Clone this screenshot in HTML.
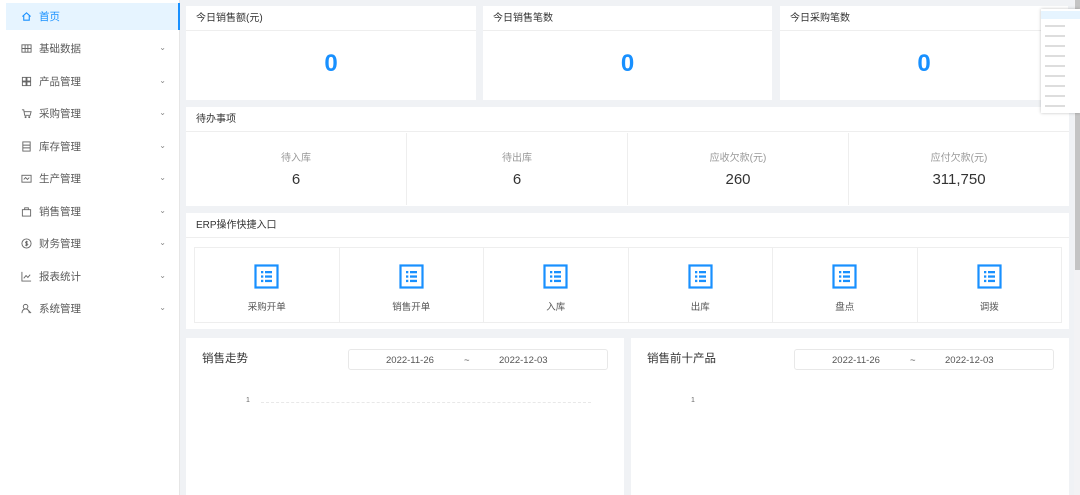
<!DOCTYPE html>
<html><head><meta charset="utf-8"><style>
*{margin:0;padding:0;box-sizing:border-box}
body{width:1080px;height:495px;overflow:hidden;background:#f0f2f5;font-family:"Liberation Sans","Noto Sans CJK SC",sans-serif;position:relative;color:#333}
.ab{position:absolute}
.side{left:0;top:0;width:180px;height:495px;background:#fff;border-right:1px solid #e6e6e6}
.mi{position:absolute;left:6px;width:174px;height:27px;font-size:10.5px;color:#5a5a5a;display:flex;align-items:center;padding-left:15px}
.mi svg{width:11px;height:11px;margin-right:7px}
.mi .ar{position:absolute;right:14px;top:8px;font-size:8px;color:#888}
.card{position:absolute;background:#fff}
.ch{font-size:10px;color:#333;height:25px;line-height:25px;padding-left:10px;border-bottom:1px solid #eee}
.big{color:#1890ff;font-weight:bold;font-size:24px;text-align:center;position:absolute;width:100%;top:44px}
.cell{position:absolute;top:26px;height:72px;text-align:center;border-right:1px solid #eee}
.cell .l{font-size:10px;color:#999;margin-top:16px}
.cell .v{font-size:15px;color:#333;margin-top:7px}
.q{position:absolute;top:34px;height:76px;border:1px solid #eee;text-align:center}
.q svg{margin-top:16px}
.q .t{font-size:9.5px;color:#555;margin-top:5px}
.date{position:absolute;border:1px solid #e8e8e8;border-radius:3px;height:21px;font-size:9.5px;color:#555}
.date span{position:absolute;top:5px}
</style></head><body>
<div class="ab side">
 <div class="mi" style="top:3px;background:#e6f4ff;color:#1890ff;border-right:2px solid #1890ff"><svg viewBox="0 0 12 12" fill="none" stroke="#1890ff" stroke-width="1.2"><path d="M1.5 6L6 2l4.5 4M3 5v5h6V5"/></svg>首页</div>
 <div class="mi" style="top:35px"><svg viewBox="0 0 12 12" fill="none" stroke="#666"><rect x="1" y="2" width="10" height="8"/><path d="M1 6h10M4.5 2v8M7.5 2v8"/></svg>基础数据<span class="ar">⌄</span></div>
 <div class="mi" style="top:68px"><svg viewBox="0 0 12 12" fill="none" stroke="#666"><rect x="1.5" y="1.5" width="4" height="4"/><rect x="6.5" y="1.5" width="4" height="4"/><rect x="1.5" y="6.5" width="4" height="4"/><rect x="6.5" y="6.5" width="4" height="4"/></svg>产品管理<span class="ar">⌄</span></div>
 <div class="mi" style="top:100px"><svg viewBox="0 0 12 12" fill="none" stroke="#666"><path d="M1 2h2l1 6h6l1-4H3.5"/><circle cx="5" cy="10" r=".6"/><circle cx="9" cy="10" r=".6"/></svg>采购管理<span class="ar">⌄</span></div>
 <div class="mi" style="top:133px"><svg viewBox="0 0 12 12" fill="none" stroke="#666"><rect x="2" y="1" width="8" height="10"/><path d="M2 4.5h8M2 7.5h8"/></svg>库存管理<span class="ar">⌄</span></div>
 <div class="mi" style="top:165px"><svg viewBox="0 0 12 12" fill="none" stroke="#666"><rect x="1" y="2.5" width="10" height="7.5"/><path d="M3 7l2-2 2 2 2-2"/></svg>生产管理<span class="ar">⌄</span></div>
 <div class="mi" style="top:198px"><svg viewBox="0 0 12 12" fill="none" stroke="#666"><rect x="1.5" y="4" width="9" height="7"/><path d="M4 4V2h4v2"/></svg>销售管理<span class="ar">⌄</span></div>
 <div class="mi" style="top:230px"><svg viewBox="0 0 12 12" fill="none" stroke="#666"><circle cx="6" cy="6" r="5"/><path d="M7.5 4.5C7 4 5 3.8 5 5s2.5.8 2.5 2S5 8 4.5 7.5M6 3v6"/></svg>财务管理<span class="ar">⌄</span></div>
 <div class="mi" style="top:263px"><svg viewBox="0 0 12 12" fill="none" stroke="#666"><path d="M1 1v10h10M3 8l2.5-3 2 2L10 4"/></svg>报表统计<span class="ar">⌄</span></div>
 <div class="mi" style="top:295px"><svg viewBox="0 0 12 12" fill="none" stroke="#666"><circle cx="5" cy="4" r="2.5"/><path d="M1 11c0-3 2-4.5 4-4.5s4 1.5 4 4.5M8 8l3 3"/></svg>系统管理<span class="ar">⌄</span></div>
</div>

<div class="card" style="left:186px;top:6px;width:290px;height:94px"><div class="ch">今日销售额(元)</div><div class="big">0</div></div>
<div class="card" style="left:483px;top:6px;width:289px;height:94px"><div class="ch">今日销售笔数</div><div class="big">0</div></div>
<div class="card" style="left:780px;top:6px;width:288px;height:94px"><div class="ch">今日采购笔数</div><div class="big">0</div></div>

<div class="card" style="left:186px;top:107px;width:883px;height:99px"><div class="ch">待办事项</div>
 <div class="cell" style="left:0;width:221px"><div class="l">待入库</div><div class="v">6</div></div>
 <div class="cell" style="left:221px;width:221px"><div class="l">待出库</div><div class="v">6</div></div>
 <div class="cell" style="left:442px;width:221px"><div class="l">应收欠款(元)</div><div class="v">260</div></div>
 <div class="cell" style="left:663px;width:220px;border:none"><div class="l">应付欠款(元)</div><div class="v">311,750</div></div>
</div>

<div class="card" style="left:186px;top:213px;width:883px;height:116px"><div class="ch">ERP操作快捷入口</div>
 <div id="qs"></div>
</div>

<div class="card" style="left:186px;top:338px;width:438px;height:157px">
 <div class="ab" style="left:16px;top:12px;font-size:11.5px;color:#333">销售走势</div>
 <div class="date" style="left:162px;top:11px;width:260px"><span style="left:37px">2022-11-26</span><span style="left:115px">~</span><span style="left:150px">2022-12-03</span></div>
 <div class="ab" style="left:60px;top:59px;font-size:7px;color:#666">1</div>
 <div class="ab" style="left:75px;top:64px;width:330px;border-top:1px dashed #e8e8e8"></div>
</div>
<div class="card" style="left:631px;top:338px;width:438px;height:157px">
 <div class="ab" style="left:16px;top:12px;font-size:11.5px;color:#333">销售前十产品</div>
 <div class="date" style="left:163px;top:11px;width:260px"><span style="left:37px">2022-11-26</span><span style="left:115px">~</span><span style="left:150px">2022-12-03</span></div>
 <div class="ab" style="left:60px;top:59px;font-size:7px;color:#666">1</div>
</div>

<div class="ab" style="left:1074px;top:0;width:6px;height:495px;background:#f3f3f5"></div>
<div class="ab" style="left:1075px;top:0;width:5px;height:270px;background:#c4c4c4"></div>

<div class="ab" style="left:1041px;top:9px;width:39px;height:104px;background:#fff;box-shadow:0 0 3px rgba(0,0,0,.25)">
 <div style="height:8px;background:#e6f4ff;margin-top:2px"></div>
</div>

<script>
var names=["采购开单","销售开单","入库","出库","盘点","调拨"],h="",w=144.5;
for(var i=0;i<6;i++){h+='<div class="q" style="left:'+(8+i*w)+'px;width:'+(w+1)+'px"><svg width="25" height="25" viewBox="0 0 25 25"><rect x="1.5" y="1.5" width="22" height="22" fill="#fff" stroke="#1890ff" stroke-width="2.2"/><g fill="#1890ff"><rect x="7" y="7" width="2.3" height="2.3"/><rect x="7" y="11.4" width="2.3" height="2.3"/><rect x="7" y="15.8" width="2.3" height="2.3"/><rect x="11" y="7" width="7" height="2.3"/><rect x="11" y="11.4" width="7" height="2.3"/><rect x="11" y="15.8" width="7" height="2.3"/></g></svg><div class="t">'+names[i]+'</div></div>';}
document.getElementById("qs").innerHTML=h;
var m=document.querySelector('[style*="left:1041px"]');
for(var j=0;j<9;j++){m.innerHTML+='<div style="position:absolute;left:4px;top:'+(16+j*10)+'px;width:20px;height:2px;background:#ddd"></div>';}
</script>
</body></html>
